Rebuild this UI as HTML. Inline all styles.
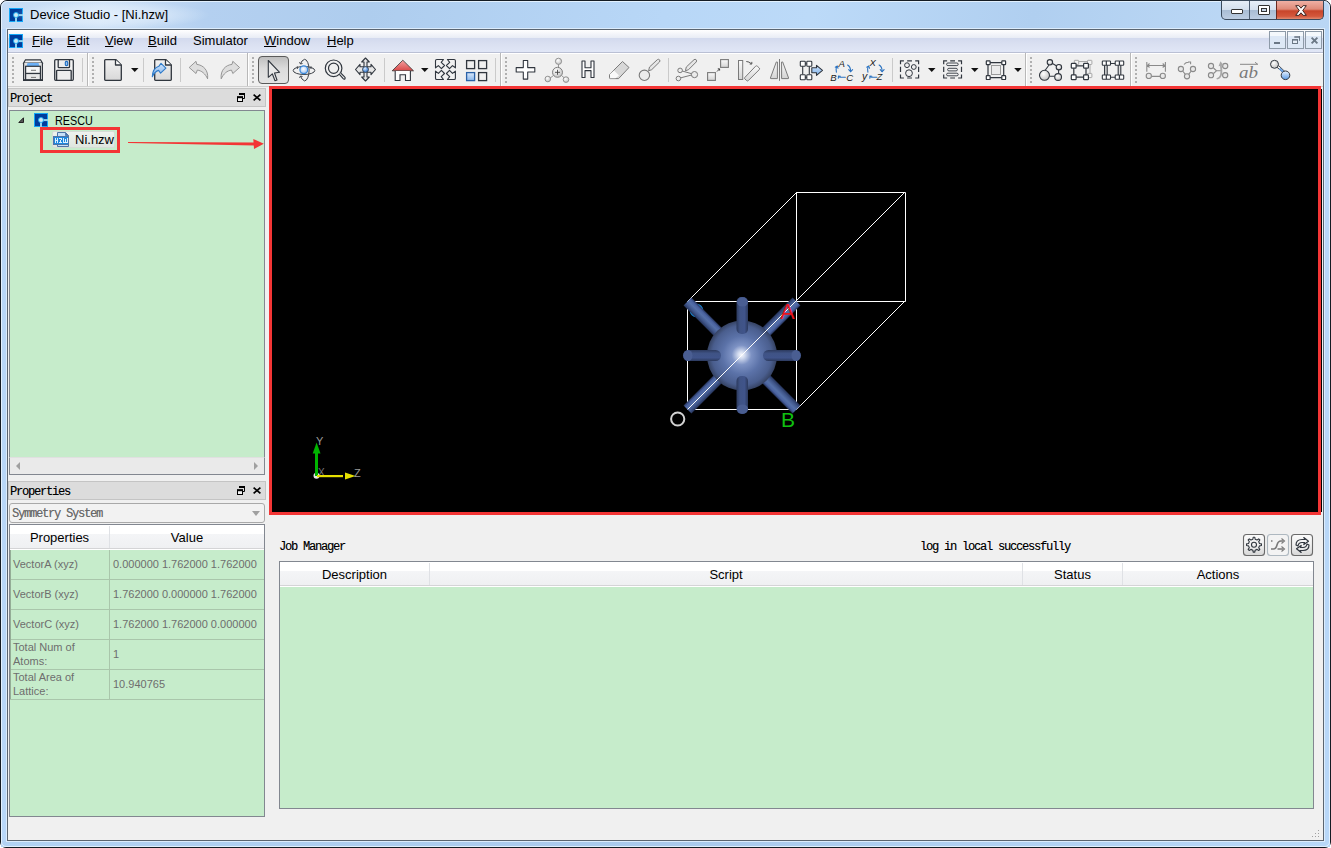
<!DOCTYPE html>
<html><head><meta charset="utf-8">
<style>
*{margin:0;padding:0;box-sizing:border-box}
html,body{width:1331px;height:848px;overflow:hidden;background:#fff}
body{position:relative;font-family:"Liberation Sans",sans-serif;font-size:13px;color:#000}
.a{position:absolute}
svg{position:absolute;overflow:visible}
#frame{left:0;top:0;width:1331px;height:848px;border:1px solid #141c24;border-radius:7px 7px 6px 6px;background:linear-gradient(100deg,#c4dbf4 0%,#cfe2f7 7%,#b4d0f0 14%,#aecdee 25%,#b8d7f7 45%,#bcdaf8 55%,#b0cff0 70%,#bcd8f5 85%,#b4d2f2 100%)}
#client{left:7px;top:29px;width:1317px;height:812px;border:1px solid #5b6570;background:#f0f0f0}
#menubar{left:8px;top:30px;width:1315px;height:23px;background:linear-gradient(#ffffff 0px,#f6f7fb 3px,#e8ecf5 8px,#d3daee 8.5px,#dae0f1 14px,#e0e6f6 21.5px,#bac0d4 22px,#bac0d4 23px)}
.menu{top:33px;font-size:13px;line-height:15px;color:#000}
#toolbar{left:8px;top:53px;width:1315px;height:33px;background:#f0f0f0;border-top:1px solid #fff}
.tbb{top:53px;width:2px;height:33px;background:#b8b8b8;border-right:1px solid #fff}
.grip{top:57px;width:2px;height:27px;background:repeating-linear-gradient(#b0b0b0 0 2px,transparent 2px 4px)}
.sep{top:58px;width:1px;height:24px;background:#cacaca}
.dd{top:69px;width:0;height:0;border-left:4px solid transparent;border-right:4px solid transparent;border-top:4px solid #000}
.dockt{height:19px;background:#dcdcdc;border:1px solid #c4c4c4;font-family:"Liberation Mono",monospace;font-size:12px;letter-spacing:-1.2px;line-height:21px;padding-left:1px;color:#000;text-shadow:0.25px 0 0 rgba(0,0,0,0.4)}
.mono{font-family:"Liberation Mono",monospace;font-size:12px;letter-spacing:-1.2px;color:#000;text-shadow:0.25px 0 0 rgba(0,0,0,0.4)}
.green{background:#c6eccb}
.hdr{background:linear-gradient(#ffffff 0px,#ffffff 9px,#f4f5f7 9px,#eff0f2 23px,#d4d4d6 23px,#d4d4d6 24px,#ffffff 24px,#ffffff 25px)}
.cell{position:absolute;font-size:11px;color:#6e6e6e;line-height:14px}
.hline{position:absolute;height:1px;background:#a9c6ab}
.vline{position:absolute;width:1px;background:#a9c6ab}
</style></head><body>
<div id="frame" class="a"></div>
<div class="a" style="left:1px;top:29px;width:6px;height:818px;background:#b8d7f8"></div>
<div class="a" style="left:1324px;top:29px;width:6px;height:818px;background:#b8d7f8"></div>
<div class="a" style="left:1px;top:841px;width:1329px;height:6px;background:linear-gradient(90deg,#b2d2f3 0%,#a9c9ec 50%,#b8d8f8 100%);border-radius:0 0 5px 5px"></div>
<div class="a" style="left:1px;top:1px;width:1329px;height:846px;border:1px solid #eaf6ff;border-radius:6px 6px 5px 5px;opacity:0.85"></div>
<div class="a" style="left:6px;top:28px;width:1319px;height:814px;border:1px solid #dcecfc"></div>

<!-- title bar -->
<svg style="left:9px;top:8px" width="14" height="14" viewBox="0 0 14 14">
 <rect x="0" y="0" width="14" height="14" fill="#12a6f6"/>
 <rect x="1" y="1" width="12" height="12" fill="#003d9c"/>
 <rect x="7" y="6.1" width="7" height="2" fill="#90d4f0"/>
 <rect x="6" y="7" width="2" height="7" fill="#90d4f0"/>
 <circle cx="7" cy="7" r="2.5" fill="#cfeaf6" stroke="#18b0f6" stroke-width="0.9"/>
</svg>
<div class="a" style="left:10px;top:1px;width:200px;height:28px;background:radial-gradient(ellipse 50% 50% at 50% 50%,rgba(240,248,255,0.6) 0%,rgba(240,248,255,0.35) 60%,rgba(240,248,255,0) 100%)"></div>
<div class="a" style="left:30px;top:7px;font-size:13px;line-height:16px;color:#000">Device Studio - [Ni.hzw]</div>

<!-- window buttons -->
<div class="a" style="left:1221px;top:0;width:103px;height:20px;border:1px solid #3a4a5c;border-top:none;border-radius:0 0 5px 5px;overflow:hidden;background:#3a4a5c">
 <div class="a" style="left:0;top:1px;width:28px;height:18px;background:linear-gradient(#e6eef7 0%,#d4e0ee 48%,#a9bdd4 52%,#bccde2 100%);border-right:1px solid #4c5c70"></div>
 <div class="a" style="left:28px;top:1px;width:27px;height:18px;background:linear-gradient(#e6eef7 0%,#d4e0ee 48%,#a9bdd4 52%,#bccde2 100%);border-right:1px solid #6a2a20"></div>
 <div class="a" style="left:55px;top:1px;width:47px;height:18px;background:linear-gradient(#efb0a4 0%,#df8a78 45%,#c8452a 55%,#d4583c 85%,#e08a70 100%)"></div>
 <div class="a" style="left:9px;top:9px;width:12px;height:5px;background:#fff;border:1px solid #333;border-radius:1px"></div>
 <div class="a" style="left:36px;top:5px;width:12px;height:10px;background:#fff;border:1px solid #333;border-radius:1px"><div class="a" style="left:2px;top:2px;width:6px;height:4px;background:#c8d6e6;border:1px solid #333"></div></div>
 <svg style="left:73px;top:5px" width="12" height="11" viewBox="0 0 12 11"><path d="M0.7 0.7 H3.9 L6 3.2 L8.1 0.7 H11.3 L7.7 5.5 L11.3 10.3 H8.1 L6 7.8 L3.9 10.3 H0.7 L4.3 5.5 Z" fill="#fff" stroke="#3b2420" stroke-width="1" stroke-linejoin="round"/></svg>
</div>

<div id="client" class="a"></div>
<div id="menubar" class="a"></div>
<svg style="left:9px;top:34px" width="14" height="14" viewBox="0 0 14 14">
 <rect x="0" y="0" width="14" height="14" fill="#12a6f6"/>
 <rect x="1" y="1" width="12" height="12" fill="#003d9c"/>
 <rect x="7" y="6.1" width="7" height="2" fill="#90d4f0"/>
 <rect x="6" y="7" width="2" height="7" fill="#90d4f0"/>
 <circle cx="7" cy="7" r="2.5" fill="#cfeaf6" stroke="#18b0f6" stroke-width="0.9"/>
</svg>
<div class="a menu" style="left:32px"><u>F</u>ile</div>
<div class="a menu" style="left:67px"><u>E</u>dit</div>
<div class="a menu" style="left:105px"><u>V</u>iew</div>
<div class="a menu" style="left:148px"><u>B</u>uild</div>
<div class="a menu" style="left:193px">Simulator</div>
<div class="a menu" style="left:264px"><u>W</u>indow</div>
<div class="a menu" style="left:327px"><u>H</u>elp</div>
<!-- MDI buttons -->
<div class="a" style="left:1269px;top:31px;width:17px;height:18px;border:1px solid #8d9aa8;background:linear-gradient(#f4f8fc 0,#f4f8fc 4px,#dde8f6 4px,#dde8f6 100%)"></div>
<div class="a" style="left:1287px;top:31px;width:17px;height:18px;border:1px solid #8d9aa8;background:linear-gradient(#f4f8fc 0,#f4f8fc 4px,#dde8f6 4px,#dde8f6 100%)"></div>
<div class="a" style="left:1305px;top:31px;width:17px;height:18px;border:1px solid #8d9aa8;background:linear-gradient(#f4f8fc 0,#f4f8fc 4px,#dde8f6 4px,#dde8f6 100%)"></div>
<svg style="left:0;top:0" width="1331" height="60">
 <rect x="1274" y="42" width="6" height="2" fill="#6b7886"/>
 <rect x="1294.3" y="36.2" width="5.7" height="1.6" fill="#6b7886"/>
 <rect x="1299" y="36.2" width="1" height="4.6" fill="#6b7886"/>
 <rect x="1292.5" y="39.5" width="5" height="4" fill="#e6eef8" stroke="#6b7886" stroke-width="1"/>
 <rect x="1292" y="39" width="6" height="1.6" fill="#6b7886"/>
 <path d="M1311.6 37.6 L1317.4 43.4 M1317.4 37.6 L1311.6 43.4" stroke="#6b7886" stroke-width="1.9"/>
</svg>
<div id="toolbar" class="a"></div>
<div class="a tbb" style="left:87px"></div><div class="a tbb" style="left:247px"></div><div class="a tbb" style="left:500px"></div><div class="a tbb" style="left:1025px"></div><div class="a tbb" style="left:1130px"></div>
<div class="a grip" style="left:12px"></div><div class="a grip" style="left:92px"></div><div class="a grip" style="left:252px"></div><div class="a grip" style="left:505px"></div><div class="a grip" style="left:1030px"></div><div class="a grip" style="left:1135px"></div>
<div class="a sep" style="left:82px"></div><div class="a sep" style="left:143px"></div><div class="a sep" style="left:180px"></div><div class="a sep" style="left:384px"></div><div class="a sep" style="left:495px"></div><div class="a sep" style="left:668px"></div><div class="a sep" style="left:892px"></div>
<div class="a" style="left:8px;top:86px;width:1315px;height:1px;background:#d0d0d0"></div>
<!--ICONS1--><svg style="left:0;top:0" width="1331" height="90">
<defs>
 <linearGradient id="gdoc" x1="0" y1="0" x2="0" y2="1"><stop offset="0" stop-color="#f2f2f2"/><stop offset="1" stop-color="#d8d8d8"/></linearGradient>
 <linearGradient id="gblue" x1="0" y1="0" x2="0" y2="1"><stop offset="0" stop-color="#cfe3fb"/><stop offset="1" stop-color="#7fb2ea"/></linearGradient>
 <radialGradient id="gball" cx="0.4" cy="0.35" r="0.6"><stop offset="0" stop-color="#e8f2ff"/><stop offset="0.5" stop-color="#7fb0ec"/><stop offset="1" stop-color="#3a78c8"/></radialGradient>
 <radialGradient id="ggray" cx="0.4" cy="0.35" r="0.65"><stop offset="0" stop-color="#ffffff"/><stop offset="1" stop-color="#c4c4c4"/></radialGradient>
</defs>
<!-- cabinet 23,59 -->
<g transform="translate(23,59)" stroke="#30363e" fill="none" stroke-width="1.2">
 <path d="M0.6 4 L2.5 0.8 H17.5 L19.4 4 Z" fill="#f4f4f4"/>
 <path d="M0.6 4 V21.3 H19.4 V4" fill="#e2e2e2"/>
 <path d="M3.5 7.2 L4.5 4 H15.5 L16.5 7.2 Z" fill="#6cb0f6" stroke="none"/>
 <rect x="2.6" y="7.3" width="14.8" height="7.2" fill="#f6f6f6"/>
 <rect x="2.6" y="14.5" width="14.8" height="6.7" fill="#e8e8e8"/>
 <path d="M8 11.3 H13 M8 18.4 H13" stroke="#777" stroke-width="1"/>
 <path d="M0.6 21 H19.4" stroke-width="1.6"/>
</g>
<!-- floppy 54,59 -->
<g transform="translate(54,59)" stroke="#30363e" fill="none" stroke-width="1.3">
 <rect x="0.7" y="0.7" width="18.6" height="20.6" rx="1" fill="#f2f2f2"/>
 <rect x="4.2" y="0.7" width="11.3" height="8" rx="0.8" fill="#eeeeee"/>
 <rect x="11.3" y="2.4" width="2.4" height="4.2" rx="1" fill="#9cc4ee" stroke="#1f6fc4" stroke-width="1.1"/>
 <rect x="2.6" y="11.3" width="14.6" height="10" rx="0.8" fill="#ededed"/>
</g>
<!-- grip/sep -->
<!-- new doc 104,59 -->
<g transform="translate(104,59)" stroke="#30363e" stroke-width="1.3" stroke-linejoin="round">
 <path d="M0.7 1.5 Q0.7 0.7 1.5 0.7 H12 L17.3 6 V20.5 Q17.3 21.3 16.5 21.3 H1.5 Q0.7 21.3 0.7 20.5 Z" fill="url(#gdoc)"/>
 <path d="M11.5 0.7 V6 H17.3" fill="#fff"/>
</g>
<path d="M131 68 H138.5 L134.75 72 Z" fill="#111"/>
<!-- import doc 152,59 -->
<g transform="translate(154,59)" stroke="#30363e" stroke-width="1.3" stroke-linejoin="round">
 <path d="M0.7 1.5 Q0.7 0.7 1.5 0.7 H12 L17.3 6 V20.5 Q17.3 21.3 16.5 21.3 H1.5 Q0.7 21.3 0.7 20.5 Z" fill="url(#gdoc)"/>
 <path d="M11.5 0.7 V6 H17.3" fill="#fff"/>
</g>
<path d="M152.3 76.8 C152.5 71.5 155 67.5 158.8 66.3 L161 63.3 L165.9 68.1 L160.6 73.2 L158.6 70.4 C156 71 153.8 73.5 152.3 76.8 Z" fill="url(#gblue)" stroke="#2f7bc9" stroke-width="1.1" stroke-linejoin="round"/>
<!-- undo 189,61 -->
<g fill="#dedede" stroke="#8c8c8c" stroke-width="0.9" stroke-linejoin="round">
 <path d="M189.2 67.5 L196 61.3 L196.8 64.4 C203 65 208.6 70 207.6 78.8 C205.2 73.6 201.6 70.6 197.3 70.1 L196 73.5 Z"/>
 <path transform="translate(428.8,0) scale(-1,1)" d="M189.2 67.5 L196 61.3 L196.8 64.4 C203 65 208.6 70 207.6 78.8 C205.2 73.6 201.6 70.6 197.3 70.1 L196 73.5 Z"/>
</g>
</svg>
<!--/ICONS1-->
<!--ICONS2--><svg style="left:0;top:0" width="1331" height="90">
<defs>
 <linearGradient id="gsel" x1="0" y1="0" x2="0" y2="1"><stop offset="0" stop-color="#bdbdbd"/><stop offset="0.45" stop-color="#dcdcdc"/><stop offset="1" stop-color="#e4e4e4"/></linearGradient>
 <linearGradient id="groof" x1="0" y1="0" x2="0" y2="1"><stop offset="0" stop-color="#f4a0a0"/><stop offset="1" stop-color="#d84848"/></linearGradient>
 <linearGradient id="gsq" x1="0" y1="0" x2="0" y2="1"><stop offset="0" stop-color="#fafafa"/><stop offset="1" stop-color="#d4d4d4"/></linearGradient>
 <linearGradient id="gsqb" x1="0" y1="0" x2="0" y2="1"><stop offset="0" stop-color="#dbe9fb"/><stop offset="1" stop-color="#8bb8ec"/></linearGradient>
</defs>
<!-- select button -->
<rect x="258.5" y="56.5" width="30" height="27" rx="3.5" fill="url(#gsel)" stroke="#5a5a5a" stroke-width="1"/>
<path d="M268.3 60.5 V77.3 L272.3 73.8 L275 80.8 L277 80 L274.5 73 L279.6 72.3 Z" fill="#e8e8e8" stroke="#30363e" stroke-width="1.1" stroke-linejoin="round"/>
<!-- rotate -->
<defs><radialGradient id="gball2" cx="0.45" cy="0.4" r="0.6"><stop offset="0" stop-color="#ffffff"/><stop offset="0.6" stop-color="#c4daf6"/><stop offset="1" stop-color="#8ab6ea"/></radialGradient></defs>
<g fill="none" stroke="#3c4148" stroke-width="1">
 <ellipse cx="304" cy="70.5" rx="10.8" ry="4"/>
 <path d="M304.5 59.3 A4.6 10.8 0 0 1 304.5 80.9"/>
 <path d="M304.5 59.3 Q301.5 60.5 300.5 63.8 M299.5 62.2 L300.5 64 L302.5 63.5"/>
 <path d="M304.5 80.9 Q301.5 79.5 300.5 76.2 M299.5 77.8 L300.5 76 L302.5 76.5"/>
 <path d="M297.3 66.3 V69 M311 66.3 V69"/>
</g>
<circle cx="303.8" cy="69.8" r="3.9" fill="url(#gball2)" stroke="#3a88d8" stroke-width="1.2"/>
<!-- zoom -->
<g fill="none" stroke="#30363e" stroke-width="1.2">
 <circle cx="333.6" cy="68.3" r="8.3"/>
 <circle cx="333.6" cy="68.3" r="5.1"/>
 <path d="M339.2 74.2 L343.2 78.6 Q344.2 79.6 345 78.8 Q345.6 77.8 344.6 76.9 L340.4 72.6" fill="#f4f4f4"/>
</g>
<!-- move -->
<path d="M365.5 58 L369.3 62 H367 V66.8 H371 V64.3 L375.5 69.5 L371 74.7 V72.3 H367 V77 H369.3 L365.5 81 L361.7 77 H364 V72.3 H360 V74.7 L355.5 69.5 L360 64.3 V66.8 H364 V62 H361.7 Z" fill="#e6e6e6" stroke="#30363e" stroke-width="1.1" stroke-linejoin="round"/>
<circle cx="365.5" cy="69.5" r="3" fill="url(#gball)" stroke="#30363e" stroke-width="0.8"/>
<!-- home -->
<path d="M392.2 70.8 L402.8 60.2 L413.5 70.8 Z" fill="url(#groof)" stroke="#333" stroke-width="0.8" stroke-linejoin="round"/>
<path d="M395.2 71 V80.5 H400 V74.7 H405.5 V80.5 H410.4 V71" fill="#fdfdfd" stroke="#30363e" stroke-width="1.1"/>
<path d="M421 68 H428.5 L424.75 72 Z" fill="#111"/>
<!-- fit -->
<g fill="#f2f2f2" stroke="#30363e" stroke-width="1.1" stroke-linejoin="round">
 <path d="M436.8 59.5 H443.5 L441.2 62.3 L444.5 65.5 L441.4 68.7 L438.4 65.6 L435.5 67.8 V60.8 Q435.5 59.5 436.8 59.5 Z"/>
 <g transform="translate(890.9,0) scale(-1,1)"><path d="M436.8 59.5 H443.5 L441.2 62.3 L444.5 65.5 L441.4 68.7 L438.4 65.6 L435.5 67.8 V60.8 Q435.5 59.5 436.8 59.5 Z"/></g>
 <g transform="translate(0,139) scale(1,-1)"><path d="M436.8 59.5 H443.5 L441.2 62.3 L444.5 65.5 L441.4 68.7 L438.4 65.6 L435.5 67.8 V60.8 Q435.5 59.5 436.8 59.5 Z"/></g>
 <g transform="translate(890.9,139) scale(-1,-1)"><path d="M436.8 59.5 H443.5 L441.2 62.3 L444.5 65.5 L441.4 68.7 L438.4 65.6 L435.5 67.8 V60.8 Q435.5 59.5 436.8 59.5 Z"/></g>
</g>
<!-- grid -->
<g stroke="#30363e" stroke-width="1.3">
 <rect x="466.6" y="60.6" width="8" height="8" fill="#f0f0f0"/>
 <rect x="478.6" y="60.6" width="8" height="8" fill="#f0f0f0"/>
 <rect x="466.6" y="72.6" width="8" height="8" fill="url(#gsqb)" stroke="#2b62a8"/>
 <rect x="478.6" y="72.6" width="8" height="8" fill="#f0f0f0"/>
</g>
<!-- plus -->
<path d="M523.30 60.50 H527.70 V67.60 H534.80 V72.00 H527.70 V79.10 H523.30 V72.00 H516.20 V67.60 H523.30 Z" fill="#fff" stroke="#30363e" stroke-width="1.1" stroke-linejoin="round"/>
<!-- atom add -->
<g stroke="#8a8a8a" stroke-width="0.9">
 <path d="M558.5 64 V68 M553.5 75.5 L549.5 78.5 M561.5 75.5 L565 78.5" fill="none"/>
 <circle cx="558.5" cy="61.3" r="3.1" fill="url(#ggray)"/>
 <circle cx="547.8" cy="79" r="2.8" fill="url(#ggray)"/>
 <circle cx="566" cy="79.6" r="2.8" fill="url(#ggray)"/>
 <circle cx="557.5" cy="72.3" r="5" fill="url(#ggray)" stroke="#777"/>
 <path d="M555 72.3 H560 M557.5 69.8 V74.8" stroke="#444" stroke-width="0.9"/>
</g>
<!-- H -->
<path d="M582 61 H585 V67.8 H591 V61 H594 V77.5 H591 V70.6 H585 V77.5 H582 Z" fill="#fff" stroke="#30363e" stroke-width="1.1" stroke-linejoin="round"/>
<!-- eraser -->
<path d="M609.5 74.5 L622.5 61.5 L629 67.5 L618.6 78.6 H610.3 Q609.5 78.6 609.5 77.8 Z" fill="#d8d8d8" stroke="#7a7a7a" stroke-width="1"/>
<path d="M609.8 74.3 L614 70.5 L619 75.5 L615.5 78.3 H610.3 Z" fill="#fafafa"/>
<!-- circle pen -->
<circle cx="644.4" cy="75.3" r="5.2" fill="#ececec" stroke="#7a7a7a" stroke-width="1.1"/>
<path d="M648.6 70.8 L649.5 67 L657.3 59.7 Q658.4 58.8 659.5 59.8 Q660.4 60.9 659.5 62 L651.7 69.7 Z" fill="#e6e6e6" stroke="#7a7a7a" stroke-width="1"/>
<!-- pen nodes -->
<g stroke="#7a7a7a" stroke-width="1" fill="#ececec">
 <path d="M680.5 70.5 L694 74.4 L678.5 78.4" fill="none"/>
 <circle cx="680.1" cy="70.4" r="2.3"/>
 <circle cx="694.5" cy="74.6" r="3.1"/>
 <circle cx="678.4" cy="78.5" r="2.3"/>
 <path d="M685.4 70.8 L686.3 67 L694 59.7 Q695.1 58.8 696.2 59.8 Q697.1 60.9 696.2 62 L688.5 69.7 Z" fill="#e6e6e6"/>
</g>
<!-- scale squares -->
<g stroke="#7a7a7a" stroke-width="1.1" fill="url(#gsq)">
 <rect x="707.6" y="72.6" width="7.8" height="7.8"/>
 <rect x="720.6" y="59.6" width="7.8" height="7.8"/>
</g>
<path d="M717 71.5 L719.5 69 M717.8 68.8 H719.6 V70.6" stroke="#333" stroke-width="0.9" fill="none"/>
<!-- slanted -->
<g stroke="#7a7a7a" stroke-width="1" fill="url(#gsq)">
 <rect x="738.5" y="60.5" width="4.2" height="19"/>
 <path d="M744.8 77.5 L755.6 66.2 Q756.5 65.4 757.3 66.2 L759.3 68 Q760 68.9 759.2 69.7 L748.3 80.6 Q747.5 81.4 746.7 80.6 L744.8 78.9 Q744 78.2 744.8 77.5 Z"/>
 <path d="M746.3 61.5 Q749 61.5 751.5 63.8 M751.8 61.9 V64 H749.7" fill="none" stroke="#555"/>
</g>
<!-- mirror -->
<g stroke="#7a7a7a" stroke-width="1" fill="url(#gsq)">
 <path d="M779.5 59 V80.8" fill="none"/>
 <path d="M770.4 78 L776.3 62 Q776.9 61.5 777.4 62 V78.6 H771 Q770.2 78.6 770.4 78 Z"/>
 <path d="M788.6 78 L782.7 62 Q782.1 61.5 781.6 62 V78.6 H788 Q788.8 78.6 788.6 78 Z"/>
</g>
<!-- cells arrow -->
<g stroke="#30363e" stroke-width="1.1" fill="#fff">
 <path d="M802.7 66 V74.5 M809.3 66 V74.5 M805 63.7 H807 M805 77.4 H807" fill="none"/>
 <rect x="800.3" y="61.3" width="5" height="5" rx="0.8"/>
 <rect x="806.8" y="61.3" width="5" height="5" rx="0.8"/>
 <rect x="800.3" y="74.7" width="5" height="5" rx="0.8"/>
 <rect x="806.8" y="74.7" width="5" height="5" rx="0.8"/>
 <path d="M811.8 67.8 H816.5 V65.3 L822.5 70.3 L816.5 75.3 V72.8 H811.8 Z" fill="url(#gblue)" stroke-linejoin="round"/>
</g>
<!-- ABC -->
<g font-family="Liberation Sans" font-style="italic" font-size="9.6" fill="#222">
 <text x="838.6" y="66.9">A</text><text x="830.3" y="80.9">B</text><text x="846.3" y="80.9">C</text>
 <text x="869.6" y="66">X</text><text x="862" y="79.6" font-size="10.5">y</text><text x="876.5" y="80.2">Z</text>
</g>
<g transform="translate(0,0)" stroke="#2a72c0" stroke-width="1.1" fill="none" stroke-linecap="round">
 <path d="M836.4 72.2 Q835.6 69 836.6 66.6"/><path d="M835.3 67.2 L837.2 66 L838 68.2"/>
 <path d="M847.6 65 Q850.6 66.6 850.6 71.4"/><path d="M848.7 69.6 L850.6 71.7 L852.6 69.6"/>
 <path d="M845.4 77.3 H840.2 Q839 77.3 838.7 76.5"/><path d="M838.3 78.2 L838.5 76.1 L840.4 76.2"/>
</g><g transform="translate(31.5,0)" stroke="#2a72c0" stroke-width="1.1" fill="none" stroke-linecap="round">
 <path d="M836.4 72.2 Q835.6 69 836.6 66.6"/><path d="M835.3 67.2 L837.2 66 L838 68.2"/>
 <path d="M847.6 65 Q850.6 66.6 850.6 71.4"/><path d="M848.7 69.6 L850.6 71.7 L852.6 69.6"/>
 <path d="M845.4 77.3 H840.2 Q839 77.3 838.7 76.5"/><path d="M838.3 78.2 L838.5 76.1 L840.4 76.2"/>
</g>
<!-- dashed circles -->
<g fill="none" stroke="#30363e" stroke-width="1.2">
 <path d="M900.5 64.2 V60.8 H903.9 M907.15 60.8 H911.9499999999999 M915.2 60.8 H918.6 V64.2 M918.6 66.80000000000001 V72.0 M918.6 74.6 V78 H915.2 M911.9499999999999 78 H907.15 M903.9 78 H900.5 V74.6 M900.5 72.0 V66.80000000000001"/>
 <circle cx="907" cy="65.2" r="2.4" stroke-width="1"/>
 <circle cx="913.8" cy="67" r="2.4" stroke-width="1"/>
 <circle cx="909" cy="73.2" r="3.4" stroke-width="1"/>
</g>
<path d="M928 68 H935.5 L931.75 72 Z" fill="#111"/>
<!-- dashed lines -->
<g fill="none" stroke="#30363e" stroke-width="1.2">
 <path d="M943.7 64.2 V60.8 H947.1 M950.2 60.8 H955.0 M958.1 60.8 H961.5 V64.2 M961.5 66.80000000000001 V72.0 M961.5 74.6 V78 H958.1 M955.0 78 H950.2 M947.1 78 H943.7 V74.6 M943.7 72.0 V66.80000000000001"/>
 <rect x="946.6" y="63" width="11.6" height="2.6" rx="1.3" stroke-width="0.9"/>
 <rect x="947.6" y="68.3" width="9.8" height="2.6" rx="1.3" stroke-width="0.9"/>
 <rect x="946.6" y="73.2" width="11.6" height="2.6" rx="1.3" stroke-width="0.9"/>
</g>
<path d="M971 68 H978.5 L974.75 72 Z" fill="#111"/>
<!-- square nodes -->
<rect x="991.5" y="65.5" width="9" height="9" fill="#ececec" stroke="#9a9a9a" stroke-width="1"/>
<g stroke="#30363e" stroke-width="1.2" fill="#fff">
 <path d="M988 62.6 H1004 M988 77.6 H1004 M988 62.6 V77.6 M1003.7 62.6 V77.6" fill="none"/>
 <rect x="986.3" y="60.8" width="3.8" height="3.8" rx="0.6"/>
 <rect x="1001.8" y="60.8" width="3.8" height="3.8" rx="0.6"/>
 <rect x="986.3" y="75.7" width="3.8" height="3.8" rx="0.6"/>
 <rect x="1001.8" y="75.7" width="3.8" height="3.8" rx="0.6"/>
</g>
<path d="M1014.2 68 H1021.7 L1017.95 72 Z" fill="#111"/>
<!-- molecule -->
<g stroke="#30363e" stroke-width="1.1" fill="url(#ggray)">
 <path d="M1045 70.5 L1049 65 M1052.5 63.5 L1056.3 65.7 M1058.6 69.8 V73.5 M1049.5 76.2 H1054.7" fill="none"/>
 <circle cx="1044.5" cy="75.3" r="5"/>
 <circle cx="1049.9" cy="62.3" r="2.7"/>
 <circle cx="1058.9" cy="67.2" r="2.7"/>
 <circle cx="1058.1" cy="77" r="3.4"/>
</g>
<!-- square nodes 2 -->
<g stroke="#a8a8a8" stroke-width="1" fill="#f4f4f4">
 <path d="M1077 61.5 H1090 V76" fill="none"/>
 <rect x="1074.3" y="60.3" width="4.4" height="4.2" rx="0.6"/>
 <rect x="1087.5" y="60.3" width="4.4" height="4.2" rx="0.6"/>
 <rect x="1087.5" y="73.4" width="4.4" height="4.2" rx="0.6"/>
</g>
<g stroke="#30363e" stroke-width="1.2" fill="#fff">
 <path d="M1073.8 66 V77.2 M1086 66 V77.2 M1073.8 65.8 H1086 M1073.8 77.2 H1086" fill="none"/>
 <rect x="1071.3" y="63.4" width="4.8" height="4.8" rx="0.8"/>
 <rect x="1083.6" y="63.4" width="4.8" height="4.8" rx="0.8"/>
 <rect x="1071.3" y="74.9" width="4.8" height="4.8" rx="0.8"/>
 <rect x="1083.6" y="74.9" width="4.8" height="4.8" rx="0.8"/>
</g>
<!-- pillars -->
<g stroke="#30363e" stroke-width="1.1" fill="#fff">
 <path d="M1107 63.5 H1117 M1107 77.3 H1117" fill="none"/>
 <rect x="1104.6" y="64" width="2.6" height="12" fill="#dedede"/>
 <rect x="1118.2" y="64" width="2.6" height="12" fill="#dedede"/>
 <rect x="1102.3" y="61" width="4.2" height="4.2" rx="0.7"/>
 <rect x="1106.3" y="61" width="4.2" height="4.2" rx="0.7"/>
 <rect x="1115.2" y="61" width="4.2" height="4.2" rx="0.7"/>
 <rect x="1119.5" y="61" width="4.2" height="4.2" rx="0.7"/>
 <rect x="1102.3" y="75" width="4.2" height="4.2" rx="0.7"/>
 <rect x="1106.3" y="75" width="4.2" height="4.2" rx="0.7"/>
 <rect x="1115.2" y="75" width="4.2" height="4.2" rx="0.7"/>
 <rect x="1119.5" y="75" width="4.2" height="4.2" rx="0.7"/>
</g>
<!-- distance -->
<g stroke="#8a8a8a" stroke-width="1.1" fill="#e8e8e8">
 <path d="M1146.8 62 V71.7 M1165.4 62 V71.7 M1147.5 65.5 H1164.7 M1149.5 63.5 L1147.6 65.5 L1149.5 67.5 M1162.7 63.5 L1164.6 65.5 L1162.7 67.5 M1151.6 76.4 H1160" fill="none"/>
 <circle cx="1148.8" cy="75.9" r="2.6"/>
 <circle cx="1162.8" cy="75.9" r="2.6"/>
</g>
<!-- angle -->
<g stroke="#8a8a8a" stroke-width="1.1" fill="#e8e8e8">
 <path d="M1182.6 71 L1185.4 74.4 M1191.3 71 L1188.6 74.4 M1184 64.5 Q1186 62 1189 62.3 M1188 62 H1190.6 V64.3" fill="none"/>
 <circle cx="1180.9" cy="69" r="2.6"/>
 <circle cx="1193" cy="69" r="2.6"/>
 <circle cx="1187" cy="76.3" r="2.6"/>
</g>
<!-- torsion -->
<g stroke="#8a8a8a" stroke-width="1.1" fill="#e8e8e8">
 <path d="M1213.5 68 L1216.5 70.8 L1213.5 73.5 M1216.5 70.8 H1221" fill="none"/>
 <circle cx="1211" cy="66" r="2.6"/>
 <circle cx="1225.2" cy="66" r="2.6"/>
 <circle cx="1211" cy="75.2" r="2.6"/>
 <circle cx="1225.2" cy="75.2" r="2.6"/>
</g>
<path d="M1216.3 78.5 Q1222 77.5 1220 66 L1218.5 66.2 L1220.5 61.2 L1223.6 65.6 L1221.8 65.8 Q1224 78.5 1217 79.5 Z" fill="#a8a8a8"/>
<!-- ab -->
<path d="M1240 64.3 H1257.8 M1255 62.3 L1257.8 64.3" stroke="#888" stroke-width="1" fill="none"/>
<text x="1239" y="77.7" font-family="Liberation Serif" font-style="italic" font-size="17.5" fill="#7a7a7a" textLength="19" lengthAdjust="spacingAndGlyphs">ab</text>
<!-- probe -->
<path d="M1276.5 66.8 L1283.5 73 M1278.3 65.3 L1285 71.7" stroke="#30363e" stroke-width="0.9"/>
<path d="M1279.5 68.5 L1284.5 73" stroke="#6aa3e6" stroke-width="2"/>
<circle cx="1274.5" cy="64.3" r="4" fill="url(#ggray)" stroke="#30363e" stroke-width="1"/>
<defs><linearGradient id="gprobe" x1="0" y1="0" x2="0" y2="1"><stop offset="0" stop-color="#eaf3ff"/><stop offset="1" stop-color="#5a9be6"/></linearGradient></defs><circle cx="1285.5" cy="75.3" r="4.3" fill="url(#gprobe)" stroke="#30363e" stroke-width="1"/>
</svg>
<!--/ICONS2-->

<!-- Project dock -->
<div class="a dockt" style="left:8px;top:88px;width:258px">Project</div>
<svg style="left:0;top:-393px" width="1331" height="848">
<path d="M239.5 486.9 H244.5 V491.5 H242.5" fill="none" stroke="#000" stroke-width="1"/>
<rect x="239" y="486" width="6" height="2" fill="#000"/>
<rect x="237.5" y="490.2" width="5" height="4.3" fill="#f2f2f2" stroke="#000" stroke-width="1"/>
<rect x="237" y="489.2" width="6" height="2" fill="#000"/>
<path d="M253.6 487.6 L260.4 493.4 M260.4 487.6 L253.6 493.4" stroke="#000" stroke-width="1.7"/>
</svg>
<div class="a green" style="left:9px;top:110px;width:256px;height:348px;border:1px solid #828790;border-bottom:none"></div>
<div class="a" style="left:9px;top:457px;width:256px;height:18px;background:#eaeaea;border:1px solid #828790;border-top:1px solid #e0e0e0"></div>
<div class="a" style="left:16px;top:462px;width:0;height:0;border-top:4px solid transparent;border-bottom:4px solid transparent;border-right:4px solid #a0a0a0"></div>
<div class="a" style="left:254px;top:462px;width:0;height:0;border-top:4px solid transparent;border-bottom:4px solid transparent;border-left:4px solid #a0a0a0"></div>

<!-- tree -->
<svg style="left:17px;top:116px" width="8" height="8"><path d="M1.8 6.5 L6.5 1.8 V6.5 Z" fill="#555" stroke="#222" stroke-width="1" stroke-linejoin="round"/></svg>
<svg style="left:34px;top:113px" width="14" height="14" viewBox="0 0 14 14">
 <rect x="0" y="0" width="14" height="14" fill="#12a6f6"/>
 <rect x="1" y="1" width="12" height="12" fill="#003d9c"/>
 <rect x="7" y="6.1" width="7" height="2" fill="#90d4f0"/>
 <rect x="6" y="7" width="2" height="7" fill="#90d4f0"/>
 <circle cx="7" cy="7" r="2.5" fill="#cfeaf6" stroke="#18b0f6" stroke-width="0.9"/>
</svg>
<div class="a" style="left:55px;top:113px;line-height:15px;transform:scaleX(0.83);transform-origin:0 0">RESCU</div>
<div class="a" style="left:52px;top:131px;width:63px;height:17px;border:1px solid #d6dcd6;border-radius:2px;background:linear-gradient(#eef2ee,#dfe6df)"></div>
<svg style="left:53px;top:132px" width="16" height="15" viewBox="0 0 16 15">
 <path d="M4.5 0.5 H12.5 L15.5 3.5 V14.5 H4.5 Z" fill="#c8e0f8" stroke="#4f74a6" stroke-width="1"/>
 <path d="M12.5 0.5 V3.5 H15.5" fill="#4f74a6" stroke="#4f74a6" stroke-width="0.8"/>
 <rect x="0.5" y="4.5" width="15" height="8" fill="#1f88de" stroke="#4f74a6" stroke-width="1"/>
 <g fill="#dcefff">
  <rect x="2" y="6" width="1" height="5"/><rect x="4" y="6" width="1" height="5"/><rect x="3" y="8" width="1" height="1"/>
  <rect x="6" y="6" width="3" height="1"/><rect x="8" y="7" width="1" height="1"/><rect x="7" y="8" width="1" height="2"/><rect x="6" y="10" width="3" height="1"/>
  <rect x="10" y="6" width="1" height="5"/><rect x="12" y="7" width="1" height="4"/><rect x="14" y="6" width="1" height="5"/><rect x="11" y="10" width="3" height="1"/>
 </g>
</svg>
<div class="a" style="left:75px;top:132px;line-height:15px">Ni.hzw</div>
<div class="a" style="left:40px;top:127px;width:80px;height:26px;border:3px solid #f33535"></div>
<svg style="left:0;top:0" width="1331" height="848"><path d="M128 142 L255 142.6 L255 145.6 L128 143.1 Z" fill="#f33535"/><path d="M253.3 139 L263.8 143.8 L254 149 Z" fill="#f33535"/></svg>

<!-- Properties dock -->
<div class="a dockt" style="left:8px;top:481px;width:258px">Properties</div>
<svg style="left:0;top:0px" width="1331" height="848">
<path d="M239.5 486.9 H244.5 V491.5 H242.5" fill="none" stroke="#000" stroke-width="1"/>
<rect x="239" y="486" width="6" height="2" fill="#000"/>
<rect x="237.5" y="490.2" width="5" height="4.3" fill="#f2f2f2" stroke="#000" stroke-width="1"/>
<rect x="237" y="489.2" width="6" height="2" fill="#000"/>
<path d="M253.6 487.6 L260.4 493.4 M260.4 487.6 L253.6 493.4" stroke="#000" stroke-width="1.7"/>
</svg>
<div class="a" style="left:9px;top:503px;width:256px;height:20px;border:1px solid #a9a9a9;border-radius:3px;background:#f2f2f2"></div>
<div class="a mono" style="left:12px;top:507px;color:#6a6a6a;line-height:14px;font-weight:normal">Symmetry System</div>
<div class="a" style="left:252px;top:511px;width:0;height:0;border-left:4px solid transparent;border-right:4px solid transparent;border-top:5px solid #a0a0a0"></div>
<div class="a green" style="left:9px;top:524px;width:256px;height:293px;border:1px solid #828790"></div>
<div class="a hdr" style="left:10px;top:525px;width:254px;height:25px"></div>
<div class="a" style="left:109px;top:526px;width:1px;height:22px;background:#dfe1e5"></div>
<div class="a" style="left:10px;top:530px;width:99px;text-align:center;font-size:13px;line-height:15px;color:#000">Properties</div>
<div class="a" style="left:110px;top:530px;width:154px;text-align:center;font-size:13px;line-height:15px;color:#000">Value</div>
<div class="hline" style="left:10px;top:579px;width:254px"></div>
<div class="cell" style="left:13px;top:557px;line-height:14px">VectorA (xyz)</div>
<div class="cell" style="left:113px;top:557px">0.000000 1.762000 1.762000</div>
<div class="hline" style="left:10px;top:609px;width:254px"></div>
<div class="cell" style="left:13px;top:587px;line-height:14px">VectorB (xyz)</div>
<div class="cell" style="left:113px;top:587px">1.762000 0.000000 1.762000</div>
<div class="hline" style="left:10px;top:639px;width:254px"></div>
<div class="cell" style="left:13px;top:617px;line-height:14px">VectorC (xyz)</div>
<div class="cell" style="left:113px;top:617px">1.762000 1.762000 0.000000</div>
<div class="hline" style="left:10px;top:669px;width:254px"></div>
<div class="cell" style="left:13px;top:640px;line-height:14px">Total Num of<br>Atoms:</div>
<div class="cell" style="left:113px;top:647px">1</div>
<div class="hline" style="left:10px;top:699px;width:254px"></div>
<div class="cell" style="left:13px;top:670px;line-height:14px">Total Area of<br>Lattice:</div>
<div class="cell" style="left:113px;top:677px">10.940765</div>
<div class="vline" style="left:109px;top:550px;height:149px"></div>
<div class="vline" style="left:10px;top:550px;height:149px;background:#94ad96"></div>


<!-- Viewport -->
<div class="a" style="left:272px;top:89px;width:1050px;height:423px;background:#000"></div>
<svg style="left:0;top:0" width="1331" height="848">
 <defs>
  <radialGradient id="sph" cx="0.5" cy="0.5" r="0.5" fx="0.49" fy="0.49">
   <stop offset="0" stop-color="#f8f9fd"/>
   <stop offset="0.1" stop-color="#d2dbef"/>
   <stop offset="0.28" stop-color="#7d92c4"/>
   <stop offset="0.55" stop-color="#5b72a8"/>
   <stop offset="0.85" stop-color="#4a5e8e"/>
   <stop offset="1" stop-color="#354262"/>
  </radialGradient>
  <linearGradient id="bv" x1="0" x2="1" y1="0" y2="0">
   <stop offset="0" stop-color="#2c3a5e"/><stop offset="0.3" stop-color="#3f5385"/><stop offset="0.7" stop-color="#40548a"/><stop offset="1" stop-color="#2c3a5e"/>
  </linearGradient>
  <linearGradient id="bh" x1="0" x2="0" y1="0" y2="1">
   <stop offset="0" stop-color="#2c3a5e"/><stop offset="0.3" stop-color="#3f5385"/><stop offset="0.7" stop-color="#40548a"/><stop offset="1" stop-color="#2c3a5e"/>
  </linearGradient>
 </defs>
 <g fill="none" stroke="#ffffff" stroke-width="1">
  <path d="M796.5 192.5 H905.5 V301.5 H796.5 Z"/>
  <path d="M687.5 301.5 H796.5 V409.5 H687.5 Z"/>
  <path d="M688 301 L797 192 M797 409 L906 300" shape-rendering="crispEdges"/>
 </g>
 <circle cx="696.5" cy="310.5" r="6" fill="none" stroke="#1a8fe0" stroke-width="1.6"/>
 <!-- diagonal bonds -->
 <defs><linearGradient id="bd" x1="0" x2="1" y1="0" y2="0">
   <stop offset="0" stop-color="#26345a"/><stop offset="0.25" stop-color="#3f5589"/><stop offset="0.55" stop-color="#5570a8"/><stop offset="0.8" stop-color="#4a62a0"/><stop offset="1" stop-color="#26345a"/>
 </linearGradient></defs>
 <g fill="url(#bd)">
  <rect x="-5.6" y="0" width="11.2" height="76" transform="translate(687.5,301.5) rotate(-45)"/>
  <rect x="-5.6" y="0" width="11.2" height="76" transform="translate(796.5,301.5) rotate(45)"/>
  <rect x="-5.6" y="0" width="11.2" height="76" transform="translate(687.5,409.5) rotate(-135)"/>
  <rect x="-5.6" y="0" width="11.2" height="76" transform="translate(796.5,409.5) rotate(135)"/>
 </g>
 <circle cx="742" cy="355.5" r="35" fill="url(#sph)"/>
 <!-- straight bonds -->
 <rect x="736.5" y="297" width="11.5" height="37" rx="5" fill="url(#bv)"/>
 <rect x="736.5" y="376" width="11.5" height="38" rx="5" fill="url(#bv)"/>
 <rect x="683" y="350" width="38" height="11" rx="5.5" fill="url(#bh)"/>
 <rect x="763" y="350" width="38" height="11" rx="5.5" fill="url(#bh)"/>
 <g fill="#4a5e92"><ellipse cx="742.5" cy="302" rx="5.5" ry="4.5"/><ellipse cx="742.5" cy="409" rx="5.5" ry="4.5"/><ellipse cx="688" cy="355.5" rx="4.5" ry="5.5"/><ellipse cx="796" cy="355.5" rx="4.5" ry="5.5"/></g>
 <line x1="688" y1="409" x2="905" y2="192" stroke="#fff" stroke-width="1" shape-rendering="crispEdges"/>
 <circle cx="677.7" cy="419" r="6.6" fill="none" stroke="#d2d2d2" stroke-width="2"/>
 <text x="780.3" y="318.6" font-family="Liberation Sans" font-size="21.5" fill="#e8141c">A</text>
 <text x="781" y="426.8" font-family="Liberation Sans" font-size="21" fill="#10c010">B</text>
 <!-- axes -->
 <text x="316" y="445" font-family="Liberation Sans" font-size="11" fill="#9a9a9a">Y</text>
 <text x="318" y="476" font-family="Liberation Sans" font-size="10" fill="#7a7a7a">X</text>
 <text x="354" y="477" font-family="Liberation Sans" font-size="11" fill="#9a9a9a">Z</text>
 <circle cx="316.5" cy="475.8" r="3" fill="#e6e6e6"/>
 <rect x="315" y="453" width="3" height="23" fill="#00b400"/>
 <path d="M316.6 442.5 L320.5 453.5 H312.7 Z" fill="#00b400"/>
 <rect x="317" y="475" width="26" height="2.2" fill="#e6e000"/>
 <path d="M345 472.5 L355.5 476 L345 479.5 Z" fill="#e6e000"/>
 
</svg>
<div class="a" style="left:269px;top:86px;width:1052px;height:429px;border:3px solid #f33535"></div>

<!-- Job manager -->
<div class="a mono" style="left:279px;top:540px;line-height:14px">Job Manager</div>
<div class="a mono" style="left:920px;top:540px;line-height:14px">log in local successfully</div>
<svg style="left:0;top:0" width="1331" height="848">
<defs><linearGradient id="gbtn" x1="0" y1="0" x2="0" y2="1"><stop offset="0" stop-color="#fbfbfb"/><stop offset="0.5" stop-color="#f0f0f0"/><stop offset="1" stop-color="#d6d6d6"/></linearGradient></defs>
<rect x="1243.5" y="534.5" width="21" height="21" rx="3" fill="url(#gbtn)" stroke="#6a6a6a" stroke-width="1.1"/>
<rect x="1267.5" y="534.5" width="21" height="21" rx="3" fill="#f3f3f3" stroke="#aeb8c0" stroke-width="1.1"/>
<rect x="1291.5" y="534.5" width="21" height="21" rx="3" fill="url(#gbtn)" stroke="#6a6a6a" stroke-width="1.1"/>
<path d="M1261.45 543.88 L1261.45 545.52 L1259.48 545.84 L1258.68 547.77 L1259.85 549.39 L1258.69 550.55 L1257.07 549.38 L1255.14 550.18 L1254.82 552.15 L1253.18 552.15 L1252.86 550.18 L1250.93 549.38 L1249.31 550.55 L1248.15 549.39 L1249.32 547.77 L1248.52 545.84 L1246.55 545.52 L1246.55 543.88 L1248.52 543.56 L1249.32 541.63 L1248.15 540.01 L1249.31 538.85 L1250.93 540.02 L1252.86 539.22 L1253.18 537.25 L1254.82 537.25 L1255.14 539.22 L1257.07 540.02 L1258.69 538.85 L1259.85 540.01 L1258.68 541.63 L1259.48 543.56 Z" fill="none" stroke="#30363e" stroke-width="1.1" stroke-linejoin="round"/>
<circle cx="1254" cy="544.7" r="2.5" fill="none" stroke="#30363e" stroke-width="1.1"/>
<g fill="none" stroke="#7a7a7a" stroke-width="1.6">
 <path d="M1271 541 H1272.5 M1271 549 H1273.5 Q1276 549 1277 545 Q1278 541 1281 541 H1283 M1277.5 549 H1283"/>
 <path d="M1281.5 538.5 L1284.5 541 L1281.5 543.5 M1281.5 546.5 L1284.5 549 L1281.5 551.5" stroke-width="1.1"/>
</g>
<g fill="none" stroke="#30363e" stroke-width="1.2" stroke-linejoin="round">
 <path d="M1296 545 Q1296 539.5 1302 539.5 H1305 L1303.8 537.5 L1308.5 541.2 L1303.8 544.5 L1304.5 542.5 H1302 Q1298.5 542.5 1298 546 Z"/>
 <path d="M1309 545 Q1309 550.5 1303 550.5 H1300 L1301.2 552.5 L1296.5 548.8 L1301.2 545.5 L1300.5 547.5 H1303 Q1306.5 547.5 1307 544 Z"/>
</g>
<!-- size grip -->
<g fill="#a0a0a0"><rect x="1318" y="830" width="1" height="1"/><rect x="1315" y="833" width="1" height="1"/><rect x="1318" y="833" width="1" height="1"/><rect x="1312" y="836" width="1" height="1"/><rect x="1315" y="836" width="1" height="1"/><rect x="1318" y="836" width="1" height="1"/></g>
</svg>
<div class="a green" style="left:279px;top:561px;width:1035px;height:248px;border:1px solid #828790"></div>
<div class="a hdr" style="left:280px;top:562px;width:1033px;height:25px"></div>
<div class="a" style="left:429px;top:563px;width:1px;height:22px;background:#dfe1e5"></div>
<div class="a" style="left:1022px;top:563px;width:1px;height:22px;background:#dfe1e5"></div>
<div class="a" style="left:1122px;top:563px;width:1px;height:22px;background:#dfe1e5"></div>
<div class="a" style="left:280px;top:567px;width:149px;text-align:center;line-height:15px">Description</div>
<div class="a" style="left:430px;top:567px;width:592px;text-align:center;line-height:15px">Script</div>
<div class="a" style="left:1023px;top:567px;width:99px;text-align:center;line-height:15px">Status</div>
<div class="a" style="left:1123px;top:567px;width:190px;text-align:center;line-height:15px">Actions</div>

</body></html>
